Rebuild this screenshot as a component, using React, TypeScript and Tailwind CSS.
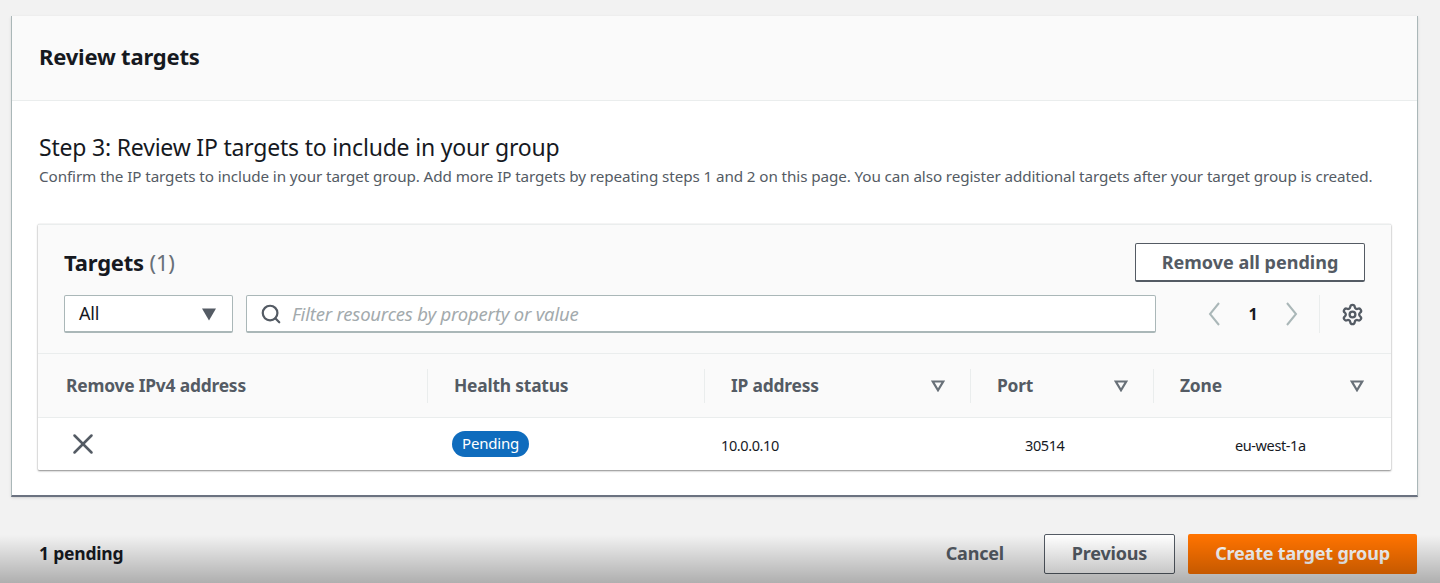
import { Search, Settings, X } from "lucide-react";

const columns = [
  { label: "Remove IPv4 address", sortable: false, padding: "pl-7" },
  { label: "Health status", sortable: false, padding: "pl-[26px]" },
  { label: "IP address", sortable: true, padding: "pl-[26px]" },
  { label: "Port", sortable: true, padding: "pl-[26px]" },
  { label: "Zone", sortable: true, padding: "pl-[26px]" },
];

const grid = "grid grid-cols-[389px_277px_266px_183px_236px]";

function Caret({ className }: { className: string }) {
  return (
    <svg viewBox="0 0 16 16" className={className}>
      <path d="M1 2.5h14L8 14.5z" fill="#545b64" />
    </svg>
  );
}

function SortCaret() {
  return (
    <svg viewBox="0 0 14 12" className="w-[14px] h-[12px]">
      <path d="M1.8 1.5h10.4L7 10.2z" fill="none" stroke="#687078" strokeWidth="2.2" />
    </svg>
  );
}

function Chevron({ flip }: { flip?: boolean }) {
  return (
    <svg viewBox="0 0 14 26" className={`w-[14px] h-[26px] ${flip ? "rotate-180" : ""}`}>
      <path d="M12 2 3 13l9 11" fill="none" stroke="#aab7b8" strokeWidth="2" />
    </svg>
  );
}

export default function App() {
  return (
    <div className="relative w-[1440px] h-[583px] overflow-hidden bg-[#f2f2f2] pt-4 px-[11px] font-['Noto_Sans',sans-serif] tracking-[-0.2px] text-[#16191f]">
      <section className="w-[1407px] h-[481px] bg-white border-l border-r border-[#aab7b8] border-b-2 border-b-[#6b7280] shadow-sm">
        <div className="h-[85px] bg-[#fafafa] border-b border-[#eaeded] flex items-center px-[27px] pb-1">
          <h2 className="text-[22px] font-bold leading-7">Review targets</h2>
        </div>

        <div className="px-[26px] pt-8">
          <h3 className="ml-px text-[23px] leading-7 font-normal">Step 3: Review IP targets to include in your group</h3>
          <p className="ml-px text-[15.24px] leading-5 text-[#545b64] mt-[5px] whitespace-nowrap tracking-[-0.1px]">
            Confirm the IP targets to include in your target group. Add more IP targets by repeating steps 1 and 2 on this page. You can also register additional targets after your target group is created.
          </p>

          <div className="mt-[38px] w-[1353px] h-[246px] border-t border-[#eaeded] shadow-[0_1px_2px_rgba(0,0,0,0.45),0_0_1px_rgba(0,0,0,0.2)] rounded-[1px] bg-white">
            <div className="h-[129px] bg-[#fafafa] border-b border-[#eaeded] px-[26px] pt-[18px]">
              <div className="flex items-start justify-between h-[40px]">
                <div className="text-[22px] leading-[38px] font-bold">
                  Targets <span className="font-normal text-[#687078]">(1)</span>
                </div>
                <button className="w-[230px] h-[39px] bg-white border border-[#545b64] border-b-2 rounded-[2px] text-[18px] font-bold tracking-[0px] text-[#545b64]">
                  Remove all pending
                </button>
              </div>
              <div className="flex items-center mt-3">
                <div className="w-[169px] h-[38px] bg-white border border-[#aab7b8] rounded-[2px] border-b-2 flex items-center justify-between pl-3.5 pr-[15px] text-[18px]">
                  All
                  <Caret className="w-4 h-4" />
                </div>
                <div className="ml-[13px] w-[910px] h-[38px] bg-white border border-[#aab7b8] border-b-2 rounded-[2px] flex items-center pl-[13px] text-[18.5px] italic text-[#a3aaad]">
                  <Search size={22} strokeWidth={2.4} className="text-[#545b64] mr-[10px]" />
                  Filter resources by property or value
                </div>
                <div className="flex items-center ml-[51px]">
                  <Chevron />
                  <span className="w-[64px] text-center text-[16px] font-bold text-[#16191f]">1</span>
                  <Chevron flip />
                </div>
                <div className="ml-[20px] h-[38px] border-l border-[#eaeded] pl-[21px] flex items-center">
                  <Settings size={23} strokeWidth={2.4} className="text-[#545b64]" />
                </div>
              </div>
            </div>

            <div className={`${grid} h-[64px] bg-[#fafafa] border-b border-[#eaeded] items-center`}>
              {columns.map((column, i) => (
                <div
                  key={column.label}
                  className={`${column.padding} h-[34px] flex items-center justify-between pr-[25px] text-[17.4px] font-bold text-[#545b64] ${i > 0 ? "border-l border-[#eaeded]" : ""}`}
                >
                  {column.label}
                  {column.sortable && <SortCaret />}
                </div>
              ))}
            </div>

            <div className={`${grid} h-[52px] items-center text-[14.5px] tracking-[-0.4px] text-[#16191f]`}>
              <div className="pl-7">
                <X size={34} strokeWidth={1.8} className="text-[#545b64]" />
              </div>
              <div className="pl-[25px]">
                <span className="inline-block h-[26px] px-[10px] rounded-full bg-[#0f6cbd] text-white text-[15px] tracking-[-0.2px] leading-[24px]">Pending</span>
              </div>
              <div className="pl-[17px] pt-1">10.0.0.10</div>
              <div className="pl-[55px] pt-1">30514</div>
              <div className="pl-[82px] pt-1">eu-west-1a</div>
            </div>
          </div>
        </div>
      </section>

      <footer className="flex items-center justify-between mt-[37px] pl-[28px] pr-[12px]">
        <span className="text-[17.5px] font-bold pb-0.5">1 pending</span>
        <div className="flex items-center">
          <span className="text-[18px] font-bold text-[#545b64] pb-0.5">Cancel</span>
          <button className="ml-[40px] w-[131px] h-[40px] bg-white border border-[#545b64] rounded-[2px] text-[18px] font-bold text-[#545b64] pb-0.5">Previous</button>
          <button className="ml-[13px] w-[229px] h-[40px] bg-[#ff7300] rounded-[2px] text-[18px] font-bold text-white pb-0.5">Create target group</button>
        </div>
      </footer>

      <div className="absolute inset-x-0 bottom-0 h-[48px] pointer-events-none bg-gradient-to-b from-[rgba(0,0,0,0)] to-[rgba(0,0,0,0.28)]" />
    </div>
  );
}
